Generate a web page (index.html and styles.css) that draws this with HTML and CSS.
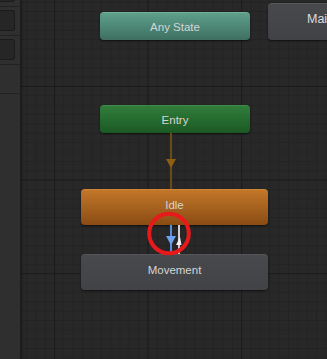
FILE: index.html
```html
<!DOCTYPE html>
<html lang="en">
<head>
    <meta charset="UTF-8">
    <meta name="viewport" content="width=device-width, initial-scale=1.0">
    <title>Animator</title>
    <link rel="stylesheet" href="styles.css">
</head>
<body>
    <div class="animator">
        <div class="layers">
            <div class="layer-row first"><div class="layer-box"></div></div>
            <div class="layer-row"><div class="layer-box"></div></div>
            <div class="layer-row"><div class="layer-box"></div></div>
            <div class="layer-row"></div>
        </div>

        <div class="graph">
            <div class="node any-state">Any State</div>
            <div class="node machine">Main</div>
            <div class="node entry">Entry</div>
            <div class="node idle">Idle</div>
            <div class="node movement">Movement</div>

            <!-- transitions and highlight -->
            <svg class="links" width="306" height="359" viewBox="21 0 306 359">
                <rect x="170" y="133" width="2" height="56" fill="#6a4b14"/>
                <polygon points="166,159 176,159 171,168" fill="#8f5e12"/>

                <rect x="178" y="225" width="2" height="29" fill="#cfcfcf"/>
                <polygon points="180,237 181.5,245 176,245" fill="#f2f2f2"/>
                <rect x="170" y="225" width="2" height="29" fill="#5a8fd8"/>
                <polygon points="166,236 176,236 171,245" fill="#6ea3f2"/>

                <circle cx="169" cy="233.5" r="19.8" fill="none" stroke="#e8191b" stroke-width="4"/>
            </svg>
        </div>
    </div>
</body>
</html>
```

FILE: styles.css
```css
body {
    margin: 0;
    background-color: #282828;
    font-family: 'Liberation Sans', Arial, sans-serif;
}

.animator {
    display: flex;
    width: 327px;
    height: 359px;
    overflow: hidden;
}

.layers {
    width: 20px;
    flex-shrink: 0;
    background-color: #2f2f2f;
    border-right: 1px solid #1d1d1d;
    box-shadow: 1px 0 2px rgba(0, 0, 0, 0.35);
    z-index: 1;
}

.layer-row {
    height: 25px;
    border-bottom: 1px solid #222;
    padding-top: 3px;
    box-sizing: content-box;
}

.layer-row.first {
    margin-top: -22px;
}

.layer-box {
    width: 14px;
    height: 19px;
    background-color: #262626;
    border: 1px solid #1b1b1b;
    border-left: none;
    border-radius: 0 3px 3px 0;
}

.graph {
    position: relative;
    flex: 1;
    background-color: #282828;
    background-image:
        linear-gradient(to right, #1b1b1b 1px, transparent 1px),
        linear-gradient(to bottom, #1b1b1b 1px, transparent 1px),
        linear-gradient(to right, #232323 1px, transparent 1px),
        linear-gradient(to bottom, #232323 1px, transparent 1px);
    background-size: 93.6px 93.6px, 93.6px 93.6px, 9.36px 9.36px, 9.36px 9.36px;
    background-position: 33px 86px, 33px 86px, 33px 86px, 33px 86px;
}

.node {
    position: absolute;
    box-sizing: border-box;
    border-radius: 4px;
    color: #d4d4d4;
    font-size: 11.5px;
    text-align: center;
    box-shadow: 0 1px 2px rgba(0, 0, 0, 0.6);
}

.any-state {
    left: 79px;
    top: 12px;
    width: 150px;
    height: 28px;
    line-height: 28px;
    background: linear-gradient(#5e9f8b, #3e6f61);
    border-top: 1px solid #74b19c;
}

.machine {
    left: 247px;
    top: 3px;
    width: 110px;
    height: 37px;
    padding-top: 8px;
    padding-left: 39px;
    text-align: left;
    font-size: 12.5px;
    color: #dcdcdc;
    background: linear-gradient(#48494d, #414246);
    border-top: 1px solid #56575b;
}

.entry {
    left: 79px;
    top: 105px;
    width: 150px;
    height: 28px;
    line-height: 28px;
    background: linear-gradient(#307d3b, #1b5923);
    border-top: 1px solid #3f8c48;
}

.idle {
    left: 60px;
    top: 189px;
    width: 187px;
    height: 36px;
    padding-top: 9px;
    background: linear-gradient(#c27729, #8a4c14);
    border-top: 1px solid #d08638;
}

.movement {
    left: 60px;
    top: 254px;
    width: 187px;
    height: 36px;
    padding-top: 9px;
    background: linear-gradient(#48494d, #424347);
    border-top: 1px solid #55565a;
}

.links {
    position: absolute;
    left: 0;
    top: 0;
}
```
